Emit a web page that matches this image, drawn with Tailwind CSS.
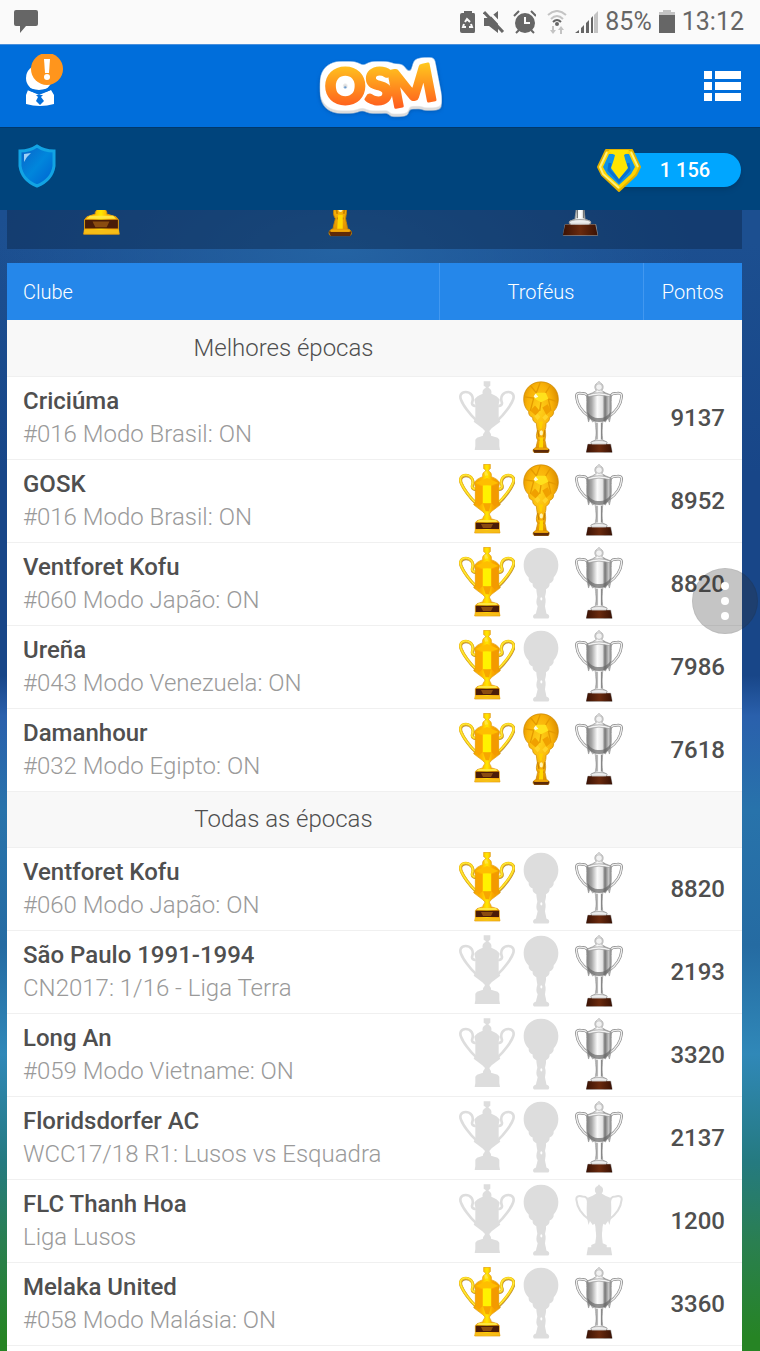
<!DOCTYPE html>
<html lang="pt">

<head>
  <meta charset="UTF-8" />
  <meta name="viewport" content="width=device-width, initial-scale=1.0" />
  <title>OSM - Troféus</title>
  <script src="https://cdn.jsdelivr.net/npm/@tailwindcss/browser@4"></script>
</head>

<body class="font-[Roboto,sans-serif] text-[#4f4f4f]">

  <!-- Shared trophy shapes -->
  <svg class="absolute h-0 w-0" aria-hidden="true">
    <defs>
      <linearGradient id="gold" x1="0" x2="1" y1="0" y2="0">
        <stop offset="0" stop-color="#f2a200" />
        <stop offset=".3" stop-color="#ffb700" />
        <stop offset=".5" stop-color="#ffe800" />
        <stop offset=".7" stop-color="#fba900" />
        <stop offset="1" stop-color="#ea9600" />
      </linearGradient>
      <radialGradient id="ballGold" cx=".45" cy=".4" r=".6">
        <stop offset="0" stop-color="#ffd21a" />
        <stop offset=".6" stop-color="#f9b208" />
        <stop offset="1" stop-color="#d98a00" />
      </radialGradient>
      <linearGradient id="silver" x1="0" x2="1" y1="0" y2="0">
        <stop offset="0" stop-color="#7c7c7c" />
        <stop offset=".2" stop-color="#a8a8a8" />
        <stop offset=".42" stop-color="#fafafa" />
        <stop offset=".62" stop-color="#e4e4e4" />
        <stop offset=".72" stop-color="#757575" />
        <stop offset=".86" stop-color="#c4c4c4" />
        <stop offset="1" stop-color="#707070" />
      </linearGradient>
      <linearGradient id="wood" x1="0" x2="1" y1="0" y2="0">
        <stop offset="0" stop-color="#3a1204" />
        <stop offset=".5" stop-color="#6a2a0e" />
        <stop offset="1" stop-color="#3a1204" />
      </linearGradient>

      <path id="cupHandles" d="M50 74C42 76 37 70 40 62C45 48 36 33 20 33C6 33 1 44 6 56C12 72 32 100 52 118M118 74C126 76 131 70 128 62C123 48 132 33 148 33C162 33 167 44 162 56C156 72 136 100 116 118" />
      <path id="cupBody" d="M74 1H94V14L89 18V21C98 25 98 34 97 38C108 42 118 48 122 56L119 70V112L124 122L114 130L98 142L91 150C93 156 98 160 96 164L116 170L121 176V196L123 207H47L49 196V176L54 170L72 164C70 160 76 156 78 150L70 142L54 130L44 122L49 112V70L46 56C50 48 60 42 71 38C70 34 70 25 80 21V18L74 14Z" />
      <path id="ballBody" d="M54 1C84 1 106 24 106 52C106 72 98 84 92 90C93 98 88 105 80 108C80 118 75 122 69 125C70 135 67 142 66 148C70 160 67 168 66 176C67 184 70 192 70 198C79 201 81 208 76 213H33C28 208 30 201 39 198C40 190 43 182 44 176C38 168 40 158 43 148C42 140 40 132 40 125C34 122 28 118 29 108C20 105 16 98 17 90C10 84 2 72 2 52C2 24 24 1 54 1Z" />
      <path id="silverHandles" d="M38 60C40 44 34 37 22 37C8 34 2 38 4 48C6 70 22 92 42 106M104 60C102 44 108 37 120 37C134 34 140 38 138 48C136 70 120 92 100 106" />
      <path id="silverBody" d="M71 1L75 6C84 8 86 22 79 28L90 35L108 42C107 46 107 50 107 56C108 72 108 96 105 108L102 122L98 110C94 116 92 118 90 122L84 118C80 126 82 136 80 146C79 158 82 168 82 176L94 181V188H106L110 212H34L38 188H48V181L60 176C60 168 64 158 62 146C60 136 62 126 58 118L52 122C50 118 48 116 44 110L40 122L37 108C34 96 34 72 35 56C35 50 35 46 34 42L52 35L63 28C56 22 58 8 67 6Z" />

      <symbol id="cup" viewBox="0 0 168 213">
        <use href="#cupHandles" fill="none" stroke="#b98c3a" stroke-width="9" transform="translate(1 2)" />
        <use href="#cupHandles" fill="none" stroke="#f9cc10" stroke-width="8" />
        <use href="#cupHandles" fill="none" stroke="#fff04a" stroke-width="3" />
        <use href="#cupBody" fill="url(#gold)" stroke="#e09a10" stroke-width="2" />
        <path d="M52 62L70 66V118L60 128L50 116V70Z" fill="#f9a400" />
        <path d="M98 66L116 62L118 70V114L108 128L98 118Z" fill="#f39a00" />
        <path d="M72 64H96V118H72Z" fill="#fff200" />
        <path d="M49 57L84 42L119 57L98 64H70Z" fill="#ffbe00" />
        <path d="M72 118H96L90 142H80Z" fill="#f7a600" />
        <path d="M76 25L82 22L88 34L78 35ZM60 168H110L116 174H53Z" fill="#ffe640" />
        <path d="M50 176H120V195H50Z" fill="#4a1c08" />
        <path d="M66 180H102L96 192H72Z" fill="#8a4c10" />
        <path d="M48 197H122V206H48Z" fill="#f6bd17" />
      </symbol>
      <symbol id="cupOff" viewBox="0 0 168 213">
        <use href="#cupHandles" fill="none" stroke="#ddd" stroke-width="8" />
        <use href="#cupBody" fill="#ddd" />
      </symbol>
      <symbol id="ball" viewBox="0 0 108 216">
        <use href="#ballBody" fill="url(#ballGold)" stroke="#c98500" stroke-width="2" />
        <path d="M40 34H68L76 52L54 62L32 50Z" fill="#ffe11c" />
        <path d="M38 36L46 46L36 50L32 44Z" fill="#fffbe0" />
        <path d="M52 2L40 34M4 46L32 50L22 88M54 62L50 88M76 52L102 60M68 34L82 12M22 12L40 34M76 52L84 88" stroke="#e59a00" stroke-width="4" fill="none" />
        <path d="M22 88L36 72L50 88L38 102ZM58 78L74 68L84 88L70 100Z" fill="#f0a000" />
        <path d="M34 104L44 96L52 106L44 116ZM58 108L68 98L76 106L66 118Z" fill="#ffd42a" />
        <path d="M48 120L60 120L56 142L50 142Z" fill="#ffd000" />
        <ellipse cx="55" cy="154" rx="5" ry="8" fill="#fff3b0" />
        <path d="M44 146L48 166M66 146L62 166M47 176L62 176" stroke="#c98200" stroke-width="4" />
        <path d="M50 168H60V198H48Z" fill="#ffd800" />
        <path d="M30 204H79L76 214H34Z" fill="#5e2a08" />
        <path d="M34 200H75V205H34Z" fill="#f0a80a" />
      </symbol>
      <symbol id="ballOff" viewBox="0 0 108 216">
        <use href="#ballBody" fill="#ddd" />
        <ellipse cx="55" cy="154" rx="3" ry="5" fill="#fff" />
      </symbol>
      <symbol id="silverCup" viewBox="0 0 142 214">
        <use href="#silverHandles" fill="none" stroke="#8a8a8a" stroke-width="8" />
        <use href="#silverHandles" fill="none" stroke="#eee" stroke-width="4" />
        <use href="#silverBody" fill="url(#silver)" stroke="#999" stroke-width="2" />
        <circle cx="71" cy="18" r="10" fill="#f2f2f2" stroke="#aaa" stroke-width="2" />
        <path d="M37 42Q71 28 105 42L101 46Q71 38 41 46Z" fill="#f4f4f4" stroke="#999" stroke-width="2" />
        <path d="M37 92Q52 112 71 110Q90 112 106 92L103 106Q90 122 71 122Q52 122 39 106Z" fill="#6a6a6a" opacity=".7" />
        <path d="M72 124V174" stroke="#fff" stroke-width="5" />
        <path d="M65 124V174M79 124V174" stroke="#777" stroke-width="3" />
        <ellipse cx="71" cy="183" rx="24" ry="6" fill="#eee" stroke="#999" stroke-width="2" />
        <path d="M38 188H105L110 212H33Z" fill="url(#wood)" />
        <path d="M50 186H92" stroke="#ddd" stroke-width="4" />
      </symbol>
      <symbol id="silverOff" viewBox="0 0 142 214">
        <use href="#silverHandles" fill="none" stroke="#ddd" stroke-width="6" />
        <use href="#silverBody" fill="#ddd" />
      </symbol>
    </defs>
  </svg>

  <div class="relative flex min-h-screen flex-col overflow-hidden bg-[radial-gradient(ellipse_350px_140px_at_45%_250px,#2463a3,transparent),linear-gradient(to_bottom,#1c4f90_0%,#1c4f90_18%,#184688_35%,#184688_50%,#2a60ac_53%,#2873ab_60%,#256ba2_70%,#3088b8_78%,#257a80_86%,#2a7f50_92%,#268424_99%)]">

    <!-- Phone status bar -->
    <div class="flex h-11 items-center justify-between bg-[#fafafa] pr-4 pl-[14px] text-[#666]">
      <svg class="h-6 w-6" viewBox="2 1 24 24" fill="currentColor">
        <path d="M4 1H24Q26 1 26 3V15Q26 17 24 17H14L8 24V17H4Q2 17 2 15V3Q2 1 4 1Z" />
      </svg>
      <div class="flex items-center gap-[7px]">
        <svg class="h-6 w-4" viewBox="0 0 16 24">
          <path d="M4 1H12V3H14Q15 3 15 5V21Q15 23 14 23H2Q0 23 0 21V5Q0 3 2 3H4Z" fill="#666" />
          <path d="M5 12L7 9L10 12M11 14L12 17H9M6 17H3L4 14" fill="none" stroke="#fafafa" stroke-width="2" />
        </svg>
        <svg class="h-6 w-[22px]" viewBox="0 0 22 24">
          <path d="M1 8H6L15 1V23L6 16H1Z" fill="#666" />
          <path d="M4 0L22 19" stroke="#fafafa" stroke-width="3" />
          <path d="M1 2L20 22" stroke="#666" stroke-width="3" />
        </svg>
        <svg class="h-6 w-6" viewBox="0 0 24 24" fill="none">
          <circle cx="13" cy="13" r="10" fill="#666" />
          <path d="M2 6L7 1M19 1L24 6M7 20L4 23M19 20L22 23" stroke="#666" stroke-width="2" />
          <path d="M13 7V13H18" stroke="#fafafa" stroke-width="2" />
        </svg>
        <svg class="h-6 w-6" viewBox="0 0 24 24" fill="none">
          <path d="M5 5Q14 -3 23 5M8 9Q14 3 20 9" stroke="#c4c4c4" stroke-width="2" />
          <path d="M10 12Q14 8 18 12" stroke="#666" stroke-width="2" />
          <circle cx="14" cy="14" r="2" fill="#666" />
          <path d="M9 16H11V20H13L10 24L7 20H9ZM17 24H19V20H21L18 16L15 20H17Z" fill="#c4c4c4" />
        </svg>
        <svg class="h-6 w-6" viewBox="0 0 24 24">
          <path d="M1 23L5 20V23ZM7 18L10 15V23H7ZM12 13L15 10V23H12ZM17 8L19 6V23H17Z" fill="#666" />
          <path d="M20 5L24 1V23H20Z" fill="#c4c4c4" />
        </svg>
        <span class="text-[25px] leading-8">85%</span>
        <svg class="h-6 w-4" viewBox="0 0 16 24">
          <path d="M4 0H12V2H16V7H0V2H4Z" fill="#c4c4c4" />
          <path d="M0 5H16V23H0Z" fill="#666" />
        </svg>
        <span class="text-[25px] leading-8">13:12</span>
      </div>
    </div>

    <!-- App header -->
    <header class="relative z-10">
      <div class="flex h-[83px] items-center justify-between border-t border-[#4a90dc] bg-[#006edb] px-4">
        <button type="button" aria-label="Perfil" class="w-[121px]">
          <svg class="h-16 w-12" viewBox="0 5 48 64">
            <circle cx="23" cy="29" r="13" fill="#fff" />
            <path d="M12 41L23 46L35 41L38 46V55Q24 59 10 55V46Z" fill="#fff" />
            <path d="M20 46H27L25 48L28 52L24 56L20 52L22 48Z" fill="#006edb" />
            <path d="M8 37Q23 48 38 37" fill="none" stroke="#006edb" stroke-width="3" />
            <circle cx="31" cy="20" r="16" fill="#ff951c" />
            <path d="M28 10H34L33 24H29Z" fill="#fff" />
            <circle cx="31" cy="28" r="3" fill="#fff" />
          </svg>
        </button>
        <svg class="h-[70px] w-32" viewBox="0 0 128 70" role="img" aria-label="OSM">
          <defs>
            <linearGradient id="logoFill" gradientUnits="userSpaceOnUse" x1="0" x2="0" y1="12" y2="58">
              <stop offset="0" stop-color="#ffc81e" />
              <stop offset="1" stop-color="#ff5a1e" />
            </linearGradient>
            <!-- White rounded rim, grey lower edge and soft shadow -->
            <filter id="logoRim" filterUnits="userSpaceOnUse" x="0" y="0" width="128" height="70" color-interpolation-filters="sRGB">
              <feMorphology in="SourceAlpha" operator="dilate" radius="5" />
              <feGaussianBlur stdDeviation="2" />
              <feComponentTransfer result="rim">
                <feFuncA type="linear" slope="4" intercept="-1.4" />
              </feComponentTransfer>
              <feFlood flood-color="#fff" />
              <feComposite in2="rim" operator="in" result="white" />
              <feOffset in="rim" dy="3" result="low" />
              <feFlood flood-color="#dcdcdc" />
              <feComposite in2="low" operator="in" result="grey" />
              <feGaussianBlur in="low" stdDeviation="2" result="soft" />
              <feFlood flood-color="#003a80" flood-opacity=".6" />
              <feComposite in2="soft" operator="in" result="shadow" />
              <feMerge>
                <feMergeNode in="shadow" />
                <feMergeNode in="grey" />
                <feMergeNode in="white" />
                <feMergeNode in="SourceGraphic" />
              </feMerge>
            </filter>
          </defs>
          <text x="9 49 76" y="53 53 57" rotate="0 0 -11" font-family="Lato, sans-serif" font-weight="900" font-size="50"
            fill="url(#logoFill)" stroke="url(#logoFill)" stroke-width="3" stroke-linejoin="round" filter="url(#logoRim)">OSM</text>
        </svg>
        <button type="button" aria-label="Menu" class="flex w-[121px] justify-end pr-[3px]">
          <svg class="h-[30px] w-[37px]" viewBox="0 0 37 30" fill="#fff">
            <path d="M0 0H8V8H0ZM11 0H37V8H11ZM0 11H8V19H0ZM11 11H37V19H11ZM0 22H8V30H0ZM11 22H37V30H11Z" />
          </svg>
        </button>
      </div>

      <div class="flex h-[83px] items-center justify-between border-t border-[#00386c] bg-[#00447c] pt-[2px] pr-[19px] pl-[18px]">
        <svg class="mb-2 h-11 w-[38px]" viewBox="0 0 38 44">
          <defs>
            <linearGradient id="shieldFill" x1="0" x2="1" y1="0" y2="1">
              <stop offset="0" stop-color="#0a62c8" />
              <stop offset=".5" stop-color="#0086dc" />
              <stop offset="1" stop-color="#005fd0" />
            </linearGradient>
          </defs>
          <path d="M19 2Q26 7 36 7V22Q34 36 19 42Q4 36 2 22V7Q12 7 19 2Z" fill="url(#shieldFill)" stroke="#12a4e4" stroke-width="3" />
          <path d="M6 10L13 9Q9 12 6 18Z" fill="#9fd0f5" />
        </svg>
        <div class="flex items-center">
          <svg class="z-10 -mr-6 h-[43px] w-11" viewBox="0 0 44 43">
            <path d="M9 1H35L43 18L39 26L22 42L5 26L1 18Z" fill="#ffd400" stroke="#e2b100" stroke-width="2" stroke-linejoin="round" />
            <path d="M10 3L3 18L6 25L22 39M34 3L41 18" fill="none" stroke="#fff27a" stroke-width="2" />
            <path d="M12 5H32L38 18L34 25L22 36L10 25L6 18Z" fill="#1193e6" />
            <path d="M13 14L12 21L22 32L32 21L31 14" fill="none" stroke="#0a70d0" stroke-width="3" />
            <path d="M12 1H32Q31 4 27 6L28 10L31 19L22 30L14 19L17 10L18 6Q13 4 12 1Z" fill="#ffe500" />
          </svg>
          <span class="flex h-[34px] w-[124px] items-center justify-center rounded-r-full bg-[#00a6ff] pl-3 text-xl font-medium text-white shadow-md">1 156</span>
        </div>
      </div>
    </header>

    <main class="flex grow flex-col pr-[18px] pl-[7px]">
      <!-- Trophy totals, scrolled under the header -->
      <div class="grid h-[39px] grid-cols-3 content-end items-end overflow-hidden bg-[#0b2a50]/50 pr-4 pb-3">
        <svg class="mr-13 h-[100px] w-20 justify-self-center"><use href="#cup" /></svg>
        <svg class="mr-13 h-[100px] w-[50px] justify-self-center"><use href="#ball" /></svg>
        <svg class="mr-13 h-[98px] w-16 justify-self-center"><use href="#silverCup" /></svg>
      </div>

      <div class="mt-[14px] grow bg-white">
        <table class="w-full table-fixed border-collapse">
          <colgroup>
            <col />
            <col class="w-[204px]" />
            <col class="w-[99px]" />
          </colgroup>
          <thead>
            <tr class="h-[57px] bg-[#2587ea] text-xl font-light text-white">
              <th scope="col" class="px-4 text-left font-light">Clube</th>
              <th scope="col" class="border-x border-[#4298f0] font-light">Troféus</th>
              <th scope="col" class="font-light">Pontos</th>
            </tr>
          </thead>
          <tbody id="rows"></tbody>
        </table>
      </div>
    </main>

    <!-- Floating menu button -->
    <button type="button" aria-label="Mais opções"
      class="absolute top-[568px] right-[2px] z-20 flex h-[66px] w-[66px] flex-col items-center justify-center gap-[7px] rounded-full border border-black/5 bg-[#303030]/28">
      <span class="h-2 w-2 rounded-full bg-white"></span>
      <span class="h-2 w-2 rounded-full bg-white"></span>
      <span class="h-2 w-2 rounded-full bg-white"></span>
    </button>
  </div>

  <script>
    // Each club: name, league, won trophies (cup, ball, silver), points
    const sections = [
      {
        title: "Melhores épocas",
        clubs: [
          ["Criciúma", "#016 Modo Brasil: ON", [0, 1, 1], 9137],
          ["GOSK", "#016 Modo Brasil: ON", [1, 1, 1], 8952],
          ["Ventforet Kofu", "#060 Modo Japão: ON", [1, 0, 1], 8820],
          ["Ureña", "#043 Modo Venezuela: ON", [1, 0, 1], 7986],
          ["Damanhour", "#032 Modo Egipto: ON", [1, 1, 1], 7618],
        ],
      },
      {
        title: "Todas as épocas",
        clubs: [
          ["Ventforet Kofu", "#060 Modo Japão: ON", [1, 0, 1], 8820],
          ["São Paulo 1991-1994", "CN2017: 1/16 - Liga Terra", [0, 0, 1], 2193],
          ["Long An", "#059 Modo Vietname: ON", [0, 0, 1], 3320],
          ["Floridsdorfer AC", "WCC17/18 R1: Lusos vs Esquadra", [0, 0, 1], 2137],
          ["FLC Thanh Hoa", "Liga Lusos", [0, 0, 0], 1200],
          ["Melaka United", "#058 Modo Malásia: ON", [1, 0, 1], 3360],
        ],
      },
    ];

    const rows = document.getElementById("rows");

    function clubRow([name, league, won, points]) {
      return `
        <tr class="h-[83px] border-b border-[#f0f0f0]">
          <td class="px-4 text-2xl leading-[33px] whitespace-nowrap">
            <div class="font-medium">${name}</div>
            <div class="font-light text-[#9a9a9a]">${league}</div>
          </td>
          <td>
            <div class="flex items-start justify-center gap-2 pr-px">
              <svg class="h-[71px] w-14"><use href="#${won[0] ? "cup" : "cupOff"}" /></svg>
              <svg class="h-[73px] w-9"><use href="#${won[1] ? "ball" : "ballOff"}" /></svg>
              <svg class="ml-2 h-[72px] w-12"><use href="#${won[2] ? "silverCup" : "silverOff"}" /></svg>
            </div>
          </td>
          <td class="pr-[17px] text-right text-2xl font-medium">${points}</td>
        </tr>`;
    }

    rows.innerHTML = sections.map((section) => `
      <tr class="h-14 border-b border-[#f0f0f0] bg-[#f8f8f8]">
        <th colspan="3" scope="rowgroup" class="pr-[182px] text-center text-2xl font-light">${section.title}</th>
      </tr>
      ${section.clubs.map(clubRow).join("")}`).join("");
  </script>
</body>

</html>
